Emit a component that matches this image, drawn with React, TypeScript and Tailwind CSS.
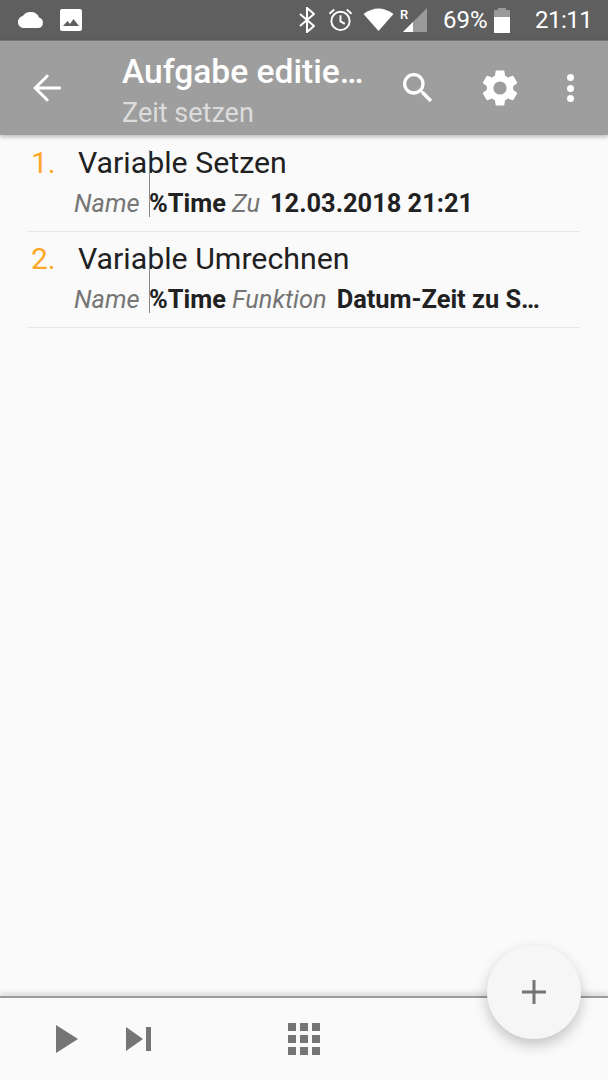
const font = { fontFamily: "Roboto, sans-serif" };

const rows = [
  { num: "1.", title: "Variable Setzen", label: "Zu", value: "12.03.2018 21:21" },
  { num: "2.", title: "Variable Umrechnen", label: "Funktion", value: "Datum-Zeit zu S…" },
];

function StatusBar() {
  return (
    <div className="flex h-[40px] items-center bg-[#5f5f5f] text-white">
      <svg width="28" height="18" viewBox="0 0 28 18" className="ml-[17px]">
        <path d="M7 17a6 6 0 0 1-1.2-11.9A9 9 0 0 1 14 1a8.5 8.5 0 0 1 8 5.5 5.4 5.4 0 0 1-.5 10.5z" fill="#fff" />
      </svg>
      <svg width="22" height="22" viewBox="0 0 22 22" className="ml-[15px]">
        <rect width="22" height="22" rx="2" fill="#fff" />
        <path d="M3 17l4.5-5 2.5 3 3.5-5 5.5 7z" fill="#5f5f5f" />
      </svg>
      <svg width="16" height="26" viewBox="0 0 16 26" className="ml-[217px]" fill="none" stroke="#fff" strokeWidth="2">
        <path d="M1 7l14 12-7 6V1l7 6L1 19" />
      </svg>
      <svg width="25" height="26" viewBox="0 0 26 26" className="ml-[13px]" fill="none" stroke="#fff" strokeWidth="2">
        <circle cx="13" cy="14" r="9.5" />
        <path d="M13 8v6.5l4.5 2.5M1.5 6.5l5-4.5M24.5 6.5l-5-4.5" />
      </svg>
      <svg width="31" height="24" viewBox="0 0 30 24" className="ml-[10px]">
        <path d="M0 6Q15-5 30 6L15 23z" fill="#fff" />
      </svg>
      <div className="relative ml-[6px] h-[24px] w-[27px]">
        <svg width="24" height="24" viewBox="0 0 24 24" className="absolute right-0 bottom-0">
          <path d="M0 24L24 0v24z" fill="#9a9a9a" />
          <path d="M0 24l10-10v10z" fill="#fff" />
        </svg>
        <span className="absolute top-[-3px] left-[0px] text-[13px] font-medium" style={font}>R</span>
      </div>
      <span className="ml-[16px] w-[44px] text-[24px] leading-none" style={font}>69%</span>
      <div className="ml-[7px] flex h-[25px] w-[16px] flex-col items-center">
        <div className="h-[2px] w-[8px] bg-[#9a9a9a]" />
        <div className="h-[7px] w-full bg-[#9a9a9a]" />
        <div className="w-full flex-1 bg-white" />
      </div>
      <span className="ml-[25px] text-[24px] leading-none tracking-[-0.5px]" style={font}>21:11</span>
    </div>
  );
}

function Toolbar() {
  return (
    <div className="relative z-10 flex h-[95px] items-center border-t border-[#777] bg-[#9e9e9e] text-white shadow-[0_2px_4px_rgba(0,0,0,0.25)]">
      <svg width="44" height="44" viewBox="0 0 24 24" fill="none" stroke="#fff" strokeWidth="1.6" className="ml-[26px]">
        <path d="M12 19l-7-7 7-7M5 12h14" />
      </svg>
      <div className="ml-[52px] w-[256px] pt-[8px]" style={font}>
        <div className="text-[33.6px] leading-[38px] font-medium whitespace-nowrap">Aufgabe editie…</div>
        <div className="mt-[4px] text-[27px] leading-[36px] text-[#dcdcdc]">Zeit setzen</div>
      </div>
      <svg width="40" height="40" viewBox="0 0 24 24" fill="#fff" className="ml-[20px]">
        <path d="M15.5 14h-.79l-.28-.27A6.47 6.47 0 0 0 16 9.5 6.5 6.5 0 1 0 9.5 16c1.61 0 3.09-.59 4.23-1.57l.27.28v.79l5 4.99L20.49 19l-4.99-5zm-6 0C7.01 14 5 11.99 5 9.5S7.01 5 9.5 5 14 7.01 14 9.5 11.99 14 9.5 14z" />
      </svg>
      <svg width="44" height="44" viewBox="0 0 24 24" fill="#fff" className="ml-[40px]">
        <path d="M19.14 12.94c.04-.3.06-.61.06-.94 0-.32-.02-.64-.07-.94l2.03-1.58a.49.49 0 0 0 .12-.61l-1.92-3.32a.49.49 0 0 0-.59-.22l-2.39.96a7 7 0 0 0-1.62-.94l-.36-2.54a.48.48 0 0 0-.48-.41h-3.84a.48.48 0 0 0-.47.41l-.36 2.54c-.59.24-1.13.57-1.62.94l-2.39-.96a.48.48 0 0 0-.59.22L2.74 8.87a.47.47 0 0 0 .12.61l2.03 1.58c-.05.3-.09.63-.09.94s.02.64.07.94l-2.03 1.58a.49.49 0 0 0-.12.61l1.92 3.32c.12.22.37.29.59.22l2.39-.96c.5.38 1.03.7 1.62.94l.36 2.54c.05.24.24.41.48.41h3.84c.24 0 .44-.17.47-.41l.36-2.54c.59-.24 1.13-.56 1.62-.94l2.39.96c.22.08.47 0 .59-.22l1.92-3.32a.46.46 0 0 0-.12-.61zM12 15.6a3.6 3.6 0 1 1 0-7.2 3.6 3.6 0 0 1 0 7.2z" />
      </svg>
      <div className="ml-[45px] flex flex-col gap-[3.5px]">
        <div className="h-[7px] w-[7px] rounded-full bg-white" />
        <div className="h-[7px] w-[7px] rounded-full bg-white" />
        <div className="h-[7px] w-[7px] rounded-full bg-white" />
      </div>
    </div>
  );
}

function Row({ row }: { row: (typeof rows)[number] }) {
  return (
    <div className="relative ml-[27px] h-[96px] w-[553px] border-b border-[#e6e6e6]" style={font}>
      <div className="flex h-[53px] items-center">
        <span className="ml-[4px] w-[47px] text-[30px] text-[#ffa726]">{row.num}</span>
        <span className="text-[30.3px] text-[#212121]">{row.title}</span>
      </div>
      <div className="-mt-px flex items-center text-[25.4px] leading-[30px] whitespace-nowrap">
        <span className="ml-[47px] w-[75px] text-[#757575] italic">Name</span>
        <span className="font-bold text-[#212121]">%Time</span>
        <span className="ml-[6px] text-[#757575] italic">{row.label}</span>
        <span className="ml-[10px] font-bold text-[#212121]">{row.value}</span>
      </div>
      {/* thin divider between the label and value columns */}
      <div className="absolute top-[14px] left-[122px] h-[67px] w-px bg-[#8a8a8a]" />
    </div>
  );
}

function BottomBar() {
  return (
    <div className="relative flex h-[84px] items-center border-t-2 border-[#9a9a9a] shadow-[0_-4px_4px_rgba(0,0,0,0.1)]">
      <svg width="22" height="28" viewBox="0 0 22 28" fill="#757575" className="ml-[56px]">
        <path d="M0 0l22 14L0 28z" />
      </svg>
      <svg width="25" height="24" viewBox="0 0 25 24" fill="#757575" className="ml-[48px]">
        <path d="M0 0l17 12L0 24zM20 0h5v24h-5z" />
      </svg>
      <div className="ml-[137px] grid grid-cols-3 gap-[4px]">
        {Array.from({ length: 9 }).map((_, i) => (
          <div key={i} className="h-[8px] w-[8px] bg-[#757575]" />
        ))}
      </div>
      {/* floating add button */}
      <div className="absolute top-[-53px] left-[487px] flex h-[94px] w-[94px] items-center justify-center rounded-full bg-[#f6f6f6] shadow-[0_6px_14px_rgba(0,0,0,0.22)]">
        <svg width="24" height="24" viewBox="0 0 24 24" fill="#757575">
          <path d="M10.5 0h3v10.5H24v3H13.5V24h-3V13.5H0v-3h10.5z" />
        </svg>
      </div>
    </div>
  );
}

export default function App() {
  return (
    <div className="flex h-[1080px] w-[608px] flex-col overflow-hidden bg-[#fafafa]">
      <StatusBar />
      <Toolbar />
      <main className="flex-1 pt-px">
        {rows.map((row) => (
          <Row key={row.num} row={row} />
        ))}
      </main>
      <BottomBar />
    </div>
  );
}
